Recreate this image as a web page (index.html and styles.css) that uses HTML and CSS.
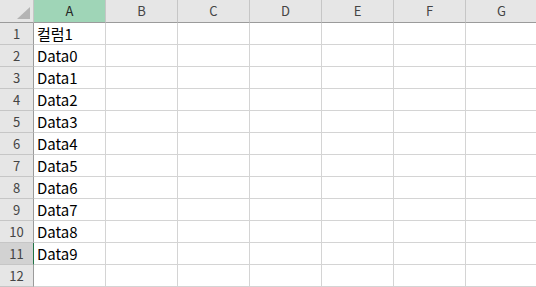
FILE: index.html
```html
<!DOCTYPE html>
<html lang="ko">
<head>
    <meta charset="UTF-8">
    <title>Sheet1</title>
    <link rel="stylesheet" href="styles.css">
</head>
<body>

<div class="sheet">
    <div class="corner"><span class="tri"></span></div>
    <div class="col-head active">A</div>
    <div class="col-head">B</div>
    <div class="col-head">C</div>
    <div class="col-head">D</div>
    <div class="col-head">E</div>
    <div class="col-head">F</div>
    <div class="col-head">G</div>
</div>

<script>
    // rows of the sheet
    const values = ["컬럼1", "Data0", "Data1", "Data2", "Data3", "Data4", "Data5", "Data6", "Data7", "Data8", "Data9", ""];
    const sheet = document.querySelector('.sheet');
    values.forEach((v, i) => {
        const head = document.createElement('div');
        head.className = 'row-head' + (i === 10 ? ' current' : '');
        head.textContent = i + 1;
        sheet.appendChild(head);
        for (let c = 0; c < 7; c++) {
            const cell = document.createElement('div');
            cell.className = 'cell';
            if (c === 0) cell.textContent = v;
            sheet.appendChild(cell);
        }
    });
</script>

</body>
</html>
```

FILE: styles.css
```css
body {
    margin: 0;
    background-color: #fff;
    overflow: hidden;
    font-family: "Noto Sans CJK KR", "Noto Sans", sans-serif;
}
.sheet {
    display: grid;
    grid-template-columns: 34px repeat(7, 72px);
    grid-template-rows: 23px repeat(12, 22px);
}
.corner {
    background-color: #e6e6e6;
    border-right: 1px solid #c6c6c6;
    border-bottom: 1px solid #9b9b9b;
    position: relative;
}
.tri {
    position: absolute;
    right: 3px;
    bottom: 3px;
    width: 0;
    height: 0;
    border-style: solid;
    border-width: 0 0 12px 13px;
    border-color: transparent transparent #b4b4b4 transparent;
}
.col-head {
    background-color: #e6e6e6;
    border-right: 1px solid #c6c6c6;
    border-bottom: 1px solid #9b9b9b;
    color: #444;
    font-size: 13px;
    line-height: 22px;
    text-align: center;
}
.col-head.active {
    background-color: #9fd5b7;
    color: #262626;
}
.row-head {
    background-color: #e6e6e6;
    border-right: 1px solid #9b9b9b;
    border-bottom: 1px solid #c6c6c6;
    color: #444;
    font-size: 13px;
    line-height: 22px;
    text-align: center;
}
.row-head.current {
    background-color: #d2d2d2;
    border-right: 1px solid #217346;
}
.cell {
    border-right: 1px solid #d4d4d4;
    border-bottom: 1px solid #d4d4d4;
    color: #000;
    font-size: 15px;
    line-height: 21px;
    padding-left: 3px;
    white-space: nowrap;
    overflow: hidden;
}
```
